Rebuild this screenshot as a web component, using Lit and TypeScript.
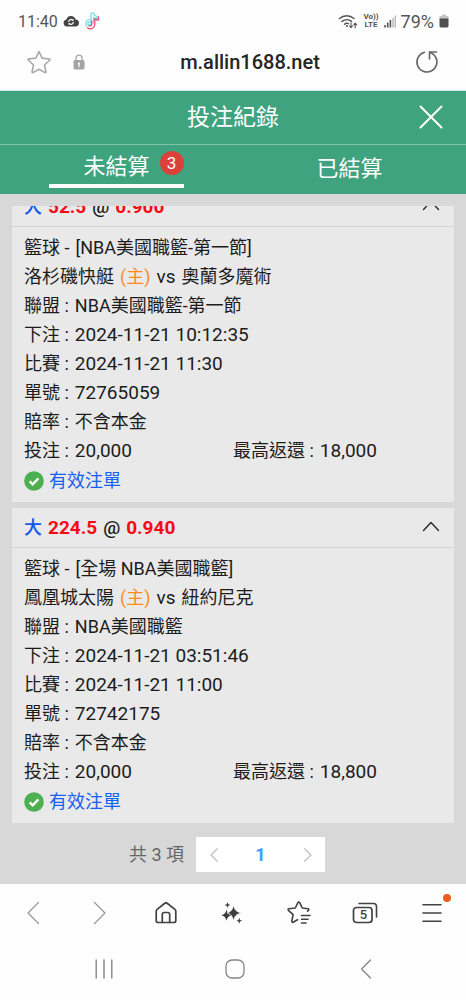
import { LitElement, html, css, svg, nothing } from "lit";
import { customElement, property, state } from "lit/decorators.js";
import { classMap } from "lit/directives/class-map.js";

interface Bet {
  pick: string;
  line: string;
  odds: string;
  title: string;
  home: string;
  away: string;
  league: string;
  placed: string;
  start: string;
  ticket: string;
  stake: string;
  payout: string;
}

const BETS: Bet[] = [
  {
    pick: "大",
    line: "52.5",
    odds: "0.900",
    title: "[NBA美國職籃-第一節]",
    home: "洛杉磯快艇",
    away: "奧蘭多魔術",
    league: "NBA美國職籃-第一節",
    placed: "2024-11-21 10:12:35",
    start: "2024-11-21 11:30",
    ticket: "72765059",
    stake: "20,000",
    payout: "18,000",
  },
  {
    pick: "大",
    line: "224.5",
    odds: "0.940",
    title: "[全場 NBA美國職籃]",
    home: "鳳凰城太陽",
    away: "紐約尼克",
    league: "NBA美國職籃",
    placed: "2024-11-21 03:51:46",
    start: "2024-11-21 11:00",
    ticket: "72742175",
    stake: "20,000",
    payout: "18,800",
  },
];

const icon = (w: number, h: number, body: unknown) => html`<svg
  width=${w}
  height=${h}
  viewBox="0 0 ${w} ${h}"
  fill="none"
  stroke-linecap="round"
  stroke-linejoin="round"
  aria-hidden="true"
>${body}</svg>`;

const icons = {
  cloud: icon(16, 12, svg`
    <path d="M4 11.500a3.600 3.600 0 0 1-.6-7.100A4.800 4.800 0 0 1 12.600 4.500a3.500 3.500 0 0 1-.4 7z" fill="#444"/>
    <path d="M5.700 6.500a2.400 2.400 0 0 1 4-1.400M10.300 7.300a2.400 2.400 0 0 1-4 1.400" stroke="#fff" stroke-width="1.200"/>
    <path d="M10.400 3.700v2H8.400zM5.600 10.100v-2h2z" fill="#fff"/>`),
  tiktok: icon(16, 18, svg`
    <path d="M6 7.500a4 4 0 0 0-3.300 6.600M9.500 11V5.500c1 .9 2.200 1.300 3.600 1.300V4.300C11.200 4.200 9.800 2.800 9.700 1H7v10.500a1.600 1.600 0 1 1-1-1.500" stroke="#5fd8dc" stroke-width="1.100"/>
    <path d="M14.500 5v3c-1.500 0-2.700-.4-3.700-1.100v5.500a4.400 4.400 0 0 1-7.200 3.300M7.800 9v3.300a1.800 1.800 0 0 1-2.600 1.500" stroke="#e8547c" stroke-width="1.300"/>`),
  wifi: icon(20, 15, svg`
    <path d="M1.500 4.500a11 11 0 0 1 14.500 0M4 7.400a7.300 7.300 0 0 1 9.500 0M6.500 10.200a3.600 3.600 0 0 1 4 -.5" stroke="#555" stroke-width="1.500"/>
    <circle cx="9" cy="12" r="1.100" fill="#555"/>
    <path d="M13 9v4.500M11.500 12l1.500 1.700 1.500-1.700M17.200 13.700V9.200M15.700 10.800l1.500-1.700 1.500 1.700" stroke="#555" stroke-width="1.100"/>`),
  signal: icon(12, 13, svg`
    <path d="M1 12.500V10M3.700 12.500V7.500M6.400 12.500V5" stroke="#555" stroke-width="1.600" stroke-linecap="butt"/>
    <path d="M9 12.500V3M11.300 12.500V.5" stroke="#bbb" stroke-width="1.500" stroke-linecap="butt"/>`),
  battery: icon(10, 14, svg`
    <path d="M3 .5h4v1.500h1.500a1 1 0 0 1 1 1V5H.5V3a1 1 0 0 1 1-1H3z" fill="#c4c4c4"/>
    <path d="M.5 4.500h9V12a1.500 1.500 0 0 1-1.500 1.500H2A1.500 1.500 0 0 1 .5 12z" fill="#505050"/>`),
  star: icon(24, 24, svg`
    <path d="M12 1.500l3.100 6.600 7.400.9c.5.100.7.600.3 1l-5.300 5 1.400 7c.1.500-.4.900-.9.600L12 19.200l-6 3.400c-.5.300-1-.1-.9-.6l1.400-7-5.300-5c-.4-.4-.2-.9.300-1l7.400-.9z" stroke="#a9a9a9" stroke-width="1.600"/>`),
  lock: icon(12, 16, svg`
    <path d="M3 7V4.200a3 3 0 0 1 6 0V7" stroke="#a5a5a5" stroke-width="1.300"/>
    <rect x=".5" y="6" width="11" height="9.500" rx="1.500" fill="#a5a5a5"/>
    <circle cx="6" cy="9.600" r="1.100" fill="#fff"/><path d="M6 9.600v3" stroke="#fff" stroke-width="1.100"/>`),
  reload: icon(24, 24, svg`
    <path d="M9.500 2.300A10 10 0 1 0 20.500 6.800Q18.500 3.800 15 2.300" stroke="#666" stroke-width="1.600"/>
    <path d="M21.500 2h-7v7" stroke="#666" stroke-width="1.600" stroke-linejoin="miter"/>`),
  close: icon(24, 24, svg`<path d="M1.500 1.500l21 21M22.500 1.500l-21 21" stroke="#fff" stroke-width="2"/>`),
  chevron: icon(18, 12, svg`<path d="M1.500 10.500L9 2.500l7.500 8" stroke="#222" stroke-width="1.300"/>`),
  check: icon(20, 20, svg`
    <circle cx="10" cy="10" r="9.800" fill="#4caf50"/>
    <path d="M5.700 10.300l3 3 5.700-6" stroke="#fff" stroke-width="2.400" stroke-linecap="butt" stroke-linejoin="miter"/>`),
  prev: icon(10, 16, svg`<path d="M8.300 1.800L2 8l6.300 6.200" stroke="#c3c6cc" stroke-width="1.500"/>`),
  next: icon(10, 16, svg`<path d="M1.700 1.800L8 8l-6.300 6.200" stroke="#c3c6cc" stroke-width="1.500"/>`),
  back: icon(14, 24, svg`<path d="M12.500 1.500L2 12l10.500 10.500" stroke="#999" stroke-width="1.300"/>`),
  forward: icon(14, 24, svg`<path d="M1.500 1.500L12 12 1.500 22.500" stroke="#999" stroke-width="1.300"/>`),
  home: icon(22, 22, svg`
    <path d="M1.200 9.300c0-.8.300-1.500.9-2L9.500 1.500a2.300 2.300 0 0 1 3 0L19.900 7.300c.6.500.9 1.200.9 2v9.200a2 2 0 0 1-2 2H3.200a2 2 0 0 1-2-2z" stroke="#424242" stroke-width="1.700"/>
    <path d="M7.300 20.300v-8a1.800 1.800 0 0 1 1.800-1.800h3.800a1.800 1.800 0 0 1 1.800 1.800v8" stroke="#424242" stroke-width="1.700"/>`),
  sparkle: icon(22, 22, svg`
    <path d="M5.500 7.500c.8 3.500 2 4.900 5.500 5.700-3.500.8-4.700 2.200-5.500 5.600-.8-3.400-2-4.800-5.200-5.600 3.200-.8 4.400-2.200 5.200-5.700z" fill="#3d3d3d"/>
    <path d="M12.500 3C13.600 8 15.300 9.800 20.500 11c-5.200 1.200-6.900 3-8 8-1.100-5-2.500-6.800-6.500-8 4-1.200 5.400-3 6.500-8z" fill="#3d3d3d" stroke="#fefefe" stroke-width=".7"/>
    <path d="M6.500 0l.8 2.200 2.200.8-2.200.8L6.500 6l-.8-2.200L3.500 3l2.200-.8zM18.300 15.700l.8 2.200 2.200.8-2.200.8-.8 2.200-.8-2.200-2.200-.8 2.200-.8z" fill="#3d3d3d"/>`),
  bookmarks: icon(24, 24, svg`
    <path d="M21.500 11.500l1-.9c.6-.6.300-1.500-.5-1.600l-5.700-.7-2.600-5.400c-.4-.8-1.400-.8-1.800 0L9.300 8.300l-6.400.7c-.8.100-1.100 1-.5 1.600l4.700 4.300-1.300 6.600c-.1.800.7 1.400 1.400 1L11.500 20" transform="translate(-1 -1.300)" stroke="#424242" stroke-width="1.600"/>
    <path d="M14.500 14.500h8.500M14.500 18.300h6.500M14.500 22h4.500" stroke="#424242" stroke-width="1.600"/>`),
  menu: icon(20, 20, svg`<path d="M1 1.800h18M1 10h18M1 18.200h18" stroke="#424242" stroke-width="1.600"/>`),
  tabs: icon(26, 22, svg`
    <rect x="1.500" y="5.500" width="18.500" height="15" rx="3" stroke="#424242" stroke-width="1.700"/>
    <path d="M7 1.500h14.500a3 3 0 0 1 3 3V15" stroke="#424242" stroke-width="1.600"/>`),
  recents: icon(18, 20, svg`<path d="M1.200 1v18M9 1v18M16.800 1v18" stroke="#858585" stroke-width="1.400"/>`),
  circle: icon(20, 20, svg`<rect x="1" y="1" width="18" height="18" rx="6" stroke="#858585" stroke-width="1.300"/>`),
  navBack: icon(12, 20, svg`<path d="M10.500 1L1.500 10l9 9" stroke="#858585" stroke-width="1.300"/>`),
};

const reset = css`
  * {
    box-sizing: border-box;
  }
  button {
    margin: 0;
    padding: 0;
    border: 0;
    background: none;
    color: inherit;
    font: inherit;
    cursor: pointer;
  }
  svg {
    display: block;
    flex: none;
  }
`;

@customElement("bet-card")
class BetCard extends LitElement {
  @property({ attribute: false }) bet!: Bet;
  @state() private open = true;

  static styles = [
    reset,
    css`
      :host {
        display: block;
        background: #e9e9e9;
        color: #1c1c1c;
      }
      .head {
        display: flex;
        align-items: center;
        justify-content: space-between;
        width: 100%;
        height: 40px;
        padding: 0 14px 4px 12px;
        border-bottom: 1px solid #d4d4d4;
        font-size: 19px;
        font-weight: 500;
      }
      .summary {
        display: flex;
        align-items: baseline;
        gap: 6px;
      }
      .pick {
        color: #1157e8;
        font-size: 18px;
      }
      .red {
        color: #f80a14;
        font-weight: 700;
      }
      .closed {
        transform: rotate(180deg);
      }
      .body {
        padding: 6px 12px 6px;
        line-height: 29px;
      }
      .row {
        display: flex;
        align-items: baseline;
        gap: 6px;
        height: 29px;
      }
      .num {
        font-size: 19px;
      }
      .amounts {
        display: grid;
        grid-template-columns: 1fr 1fr;
      }
      .home {
        color: #ff8c1a;
      }
      .valid {
        display: flex;
        align-items: center;
        gap: 5px;
        height: 31px;
        color: #1560f0;
      }
    `,
  ];

  private field(label: string, value: string, numeric = false) {
    return html`<div class="row">
      <span>${label} :</span><span class=${classMap({ num: numeric })}>${value}</span>
    </div>`;
  }

  render() {
    const b = this.bet;
    return html`
      <button class="head" aria-expanded=${this.open} @click=${() => (this.open = !this.open)}>
        <span class="summary">
          <span class="pick">${b.pick}</span>
          <span class="red">${b.line}</span>
          <span>@</span>
          <span class="red">${b.odds}</span>
        </span>
        <span class=${classMap({ closed: !this.open })}>${icons.chevron}</span>
      </button>
      ${this.open
        ? html`<div class="body">
            <div class="row"><span>籃球 -</span><span>${b.title}</span></div>
            <div class="row">
              <span>${b.home}</span><span class="home">(主)</span><span class="num">vs</span
              ><span>${b.away}</span>
            </div>
            ${this.field("聯盟", b.league)} ${this.field("下注", b.placed, true)}
            ${this.field("比賽", b.start, true)} ${this.field("單號", b.ticket, true)}
            ${this.field("賠率", "不含本金")}
            <div class="amounts">
              ${this.field("投注", b.stake, true)} ${this.field("最高返還", b.payout, true)}
            </div>
            <div class="valid">${icons.check}<span>有效注單</span></div>
          </div>`
        : nothing}
    `;
  }
}

@customElement("app-root")
class AppRoot extends LitElement {
  @state() private tab = 0;

  static styles = [
    reset,
    css`
      :host {
        display: flex;
        flex-direction: column;
        height: 100vh;
        background: #fefefe;
        font-family: Roboto, "Noto Sans CJK TC", sans-serif;
        font-size: 18px;
      }
      .status {
        display: flex;
        align-items: center;
        justify-content: space-between;
        height: 42px;
        padding: 0 17px 0 18px;
        color: #555;
      }
      .clock {
        font-size: 16px;
      }
      .group {
        display: flex;
        align-items: center;
        gap: 5px;
      }
      .volte {
        font-size: 8px;
        font-weight: 700;
        line-height: 8px;
        text-align: center;
      }
      .address {
        display: grid;
        grid-template-columns: 1fr auto 1fr;
        align-items: center;
        height: 49px;
        padding: 0 27px 8px;
        border-bottom: 1px solid #d5e8e4;
      }
      .tools {
        display: flex;
        align-items: center;
        gap: 22px;
      }
      .host {
        padding-left: 34px;
        color: #252525;
        font-size: 20px;
        font-weight: 500;
      }
      .reload {
        justify-self: end;
      }
      .title {
        display: grid;
        grid-template-columns: 1fr auto 1fr;
        align-items: center;
        height: 54px;
        padding: 0 23px 2px;
        border-bottom: 1px solid #7fc2a8;
        background: #40a380;
        color: #fff;
      }
      h1 {
        grid-column: 2;
        margin: 0;
        padding-top: 3px;
        font-size: 23px;
        font-weight: 400;
        line-height: 34px;
      }
      .close {
        justify-self: end;
      }
      .switch {
        display: grid;
        grid-template-columns: 1fr 1fr;
        justify-items: center;
        align-items: center;
        height: 49px;
        padding-bottom: 2px;
        background: #40a380;
        color: #fff;
        font-size: 22px;
        line-height: 34px;
      }
      .tab {
        position: relative;
        padding: 0 34px;
      }
      .active {
        border-bottom: 4px solid #fff;
      }
      .badge {
        position: absolute;
        top: 1px;
        right: 0;
        width: 24px;
        height: 24px;
        border-radius: 50%;
        background: #dc403b;
        font-size: 17px;
        line-height: 24px;
      }
      main {
        display: flex;
        flex: 1;
        flex-direction: column;
        min-height: 0;
        padding: 12px 12px 0;
        background: #d8d8d8;
      }
      .list {
        display: flex;
        flex: 1;
        flex-direction: column;
        gap: 6px;
        min-height: 0;
        overflow-y: auto;
        scrollbar-width: none;
      }
      .list > * {
        flex: none;
      }
      .pager {
        display: flex;
        align-items: center;
        justify-content: center;
        gap: 12px;
        padding: 14px 12px 12px 0;
        color: #666;
        line-height: 36px;
      }
      .pages {
        display: grid;
        grid-template-columns: 35px 59px 35px;
        height: 35px;
        background: #fff;
      }
      .pages button {
        display: grid;
        place-items: center;
        line-height: 35px;
      }
      .pages .current {
        color: #409eff;
        font-weight: 700;
      }
      .total {
        height: 35px;
      }
      .toolbar {
        display: grid;
        grid-template-columns: repeat(7, 1fr);
        height: 58px;
        padding-right: 1px;
      }
      .toolbar button,
      .keys button {
        display: grid;
        place-items: center;
      }
      .stack {
        position: relative;
      }
      .count {
        position: absolute;
        left: 2px;
        top: 6px;
        width: 18px;
        color: #424242;
        font-size: 13px;
        font-weight: 500;
        line-height: 14px;
        text-align: center;
      }
      .dot {
        position: absolute;
        top: -9px;
        right: -9px;
        width: 8px;
        height: 8px;
        border-radius: 50%;
        background: #e8601c;
      }
      .keys {
        display: grid;
        grid-template-columns: repeat(3, 1fr);
        height: 58px;
        padding: 0 35px 4px 38px;
      }
    `,
  ];

  async firstUpdated() {
    const list = this.renderRoot.querySelector(".list")!;
    const cards = Array.from(list.querySelectorAll("bet-card")) as LitElement[];
    await Promise.all(cards.map((c) => c.updateComplete));
    list.scrollTop = list.scrollHeight;
  }

  private renderTab(index: number, label: string, count?: number) {
    const active = this.tab === index;
    return html`<button
      role="tab"
      aria-selected=${active}
      class=${classMap({ tab: true, active })}
      @click=${() => (this.tab = index)}
    >
      ${label}${count ? html`<span class="badge">${count}</span>` : nothing}
    </button>`;
  }

  render() {
    return html`
      <div class="status">
        <div class="group"><span class="clock">11:40</span>${icons.cloud}${icons.tiktok}</div>
        <div class="group">
          ${icons.wifi}
          <div class="volte"><div>Vo))</div><div>LTE</div></div>
          ${icons.signal}<span>79%</span>${icons.battery}
        </div>
      </div>
      <div class="address">
        <div class="tools">
          <button aria-label="書籤">${icons.star}</button>
          ${icons.lock}
        </div>
        <div class="host">m.allin1688.net</div>
        <button class="reload" aria-label="重新整理">${icons.reload}</button>
      </div>
      <header class="title">
        <h1>投注紀錄</h1>
        <button class="close" aria-label="關閉">${icons.close}</button>
      </header>
      <div class="switch" role="tablist">
        ${this.renderTab(0, "未結算", 3)} ${this.renderTab(1, "已結算")}
      </div>
      <main>
        <div class="list">${BETS.map((bet) => html`<bet-card .bet=${bet}></bet-card>`)}</div>
        <div class="pager">
          <span class="total">共 3 項</span>
          <div class="pages">
            <button aria-label="上一頁">${icons.prev}</button>
            <button class="current" aria-current="page">1</button>
            <button aria-label="下一頁">${icons.next}</button>
          </div>
        </div>
      </main>
      <nav class="toolbar">
        <button aria-label="返回">${icons.back}</button>
        <button aria-label="前進">${icons.forward}</button>
        <button aria-label="首頁">${icons.home}</button>
        <button aria-label="智慧助理">${icons.sparkle}</button>
        <button aria-label="我的最愛">${icons.bookmarks}</button>
        <button aria-label="分頁"><span class="stack">${icons.tabs}<span class="count">5</span></span></button>
        <button aria-label="選單"><span class="stack">${icons.menu}<span class="dot"></span></span></button>
      </nav>
      <nav class="keys">
        <button aria-label="最近使用">${icons.recents}</button>
        <button aria-label="主畫面">${icons.circle}</button>
        <button aria-label="返回鍵">${icons.navBack}</button>
      </nav>
    `;
  }
}
